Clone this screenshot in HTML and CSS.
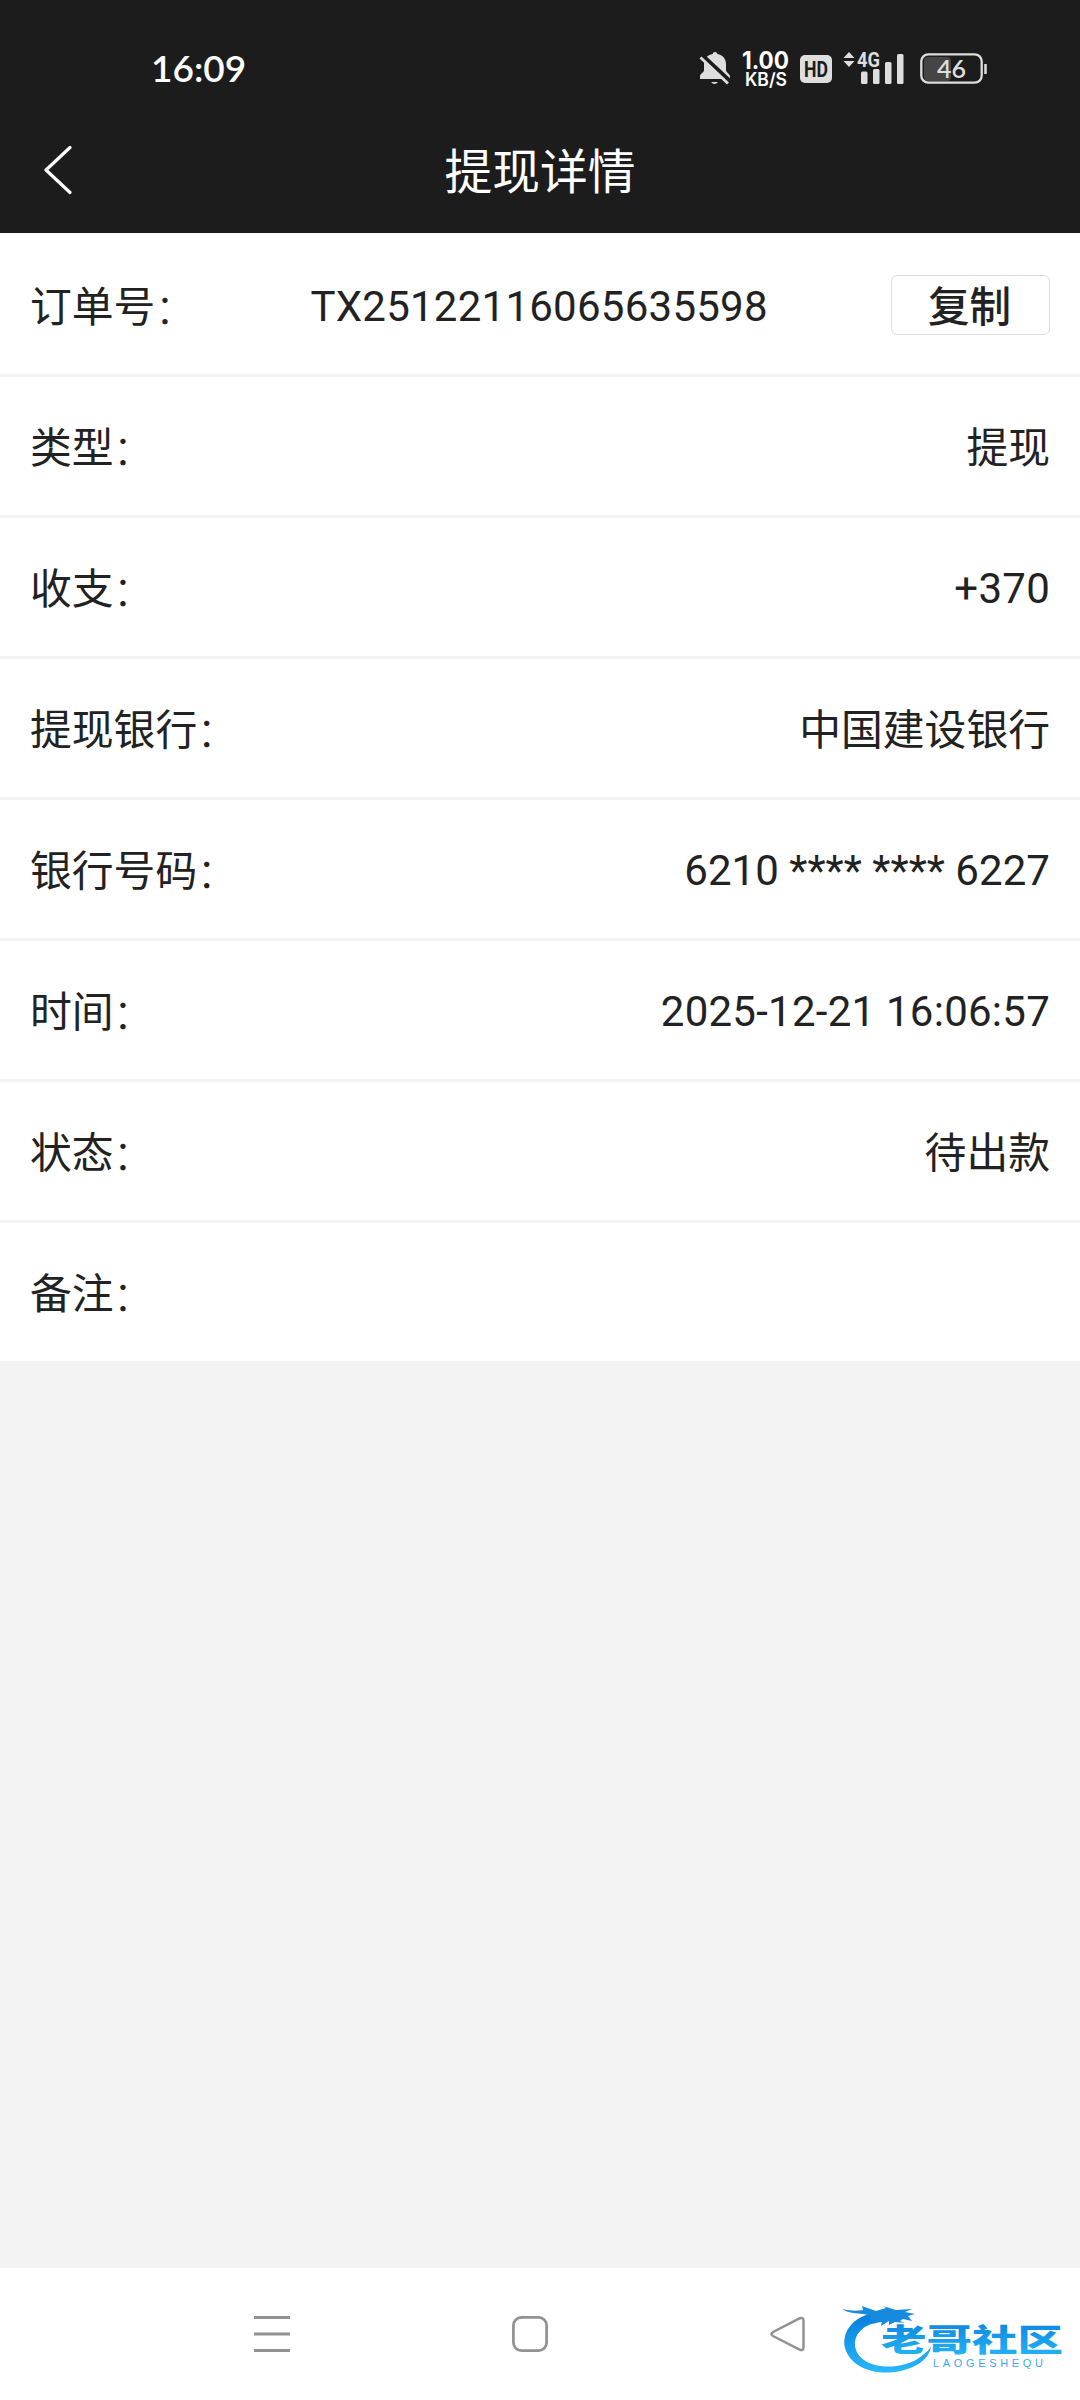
FILE: index.html
```html
<!DOCTYPE html>
<html lang="zh-CN">
<head>
<meta charset="utf-8">
<title>提现详情</title>
<link rel="stylesheet" href="styles.css">
</head>
<body>
<div class="screen">
  <header class="top">
    <div class="status">
      <span class="clock">16:09</span>
      <div class="indicators">
        <svg class="bell" width="32" height="34" viewBox="0 0 32 34"><path d="M16 0c1.500 0 2.200 .8 2.200 2C24 3 27 7 27 12v6c0 3 4 3.500 4 6.500V27H1v-2.500C1 21 5 21 5 18v-6C5 7 8 3 13.800 2 13.800.8 14.500 0 16 0z" fill="#dedede"/><path d="M12 30h7q-3.500 4-7 0z" fill="#dedede"/><path d="M3 3L32 30" stroke="#1c1c1c" stroke-width="4"/><path d="M1.500 5.500L29 31.500" stroke="#dedede" stroke-width="2.800"/></svg>
        <svg class="speed" width="48" height="44" viewBox="0 0 48 44"><text class="rate" x="0" y="22" textLength="47" lengthAdjust="spacingAndGlyphs">1.00</text><text class="unit" x="3" y="39" textLength="42" lengthAdjust="spacingAndGlyphs">KB/S</text></svg>
        <svg class="hd" width="32" height="28" viewBox="0 0 32 28"><rect width="32" height="28" rx="5" fill="#dedede"/><text class="hd-text" x="4" y="22" textLength="24" lengthAdjust="spacingAndGlyphs">HD</text></svg>
        <svg class="signal" width="61" height="34" viewBox="0 0 61 34"><g fill="#dedede"><path d="M6 0l5.500 6h-11zM6 15l5.500-6h-11z"/><rect x="18" y="19.500" width="6.500" height="12.500" rx="1.500"/><rect x="30" y="17" width="6.500" height="15" rx="1.500"/><rect x="42" y="10" width="6.500" height="22" rx="1.500"/><rect x="54" y="2" width="6.500" height="30" rx="1.500"/></g><text class="net" x="14" y="14.500" textLength="23" lengthAdjust="spacingAndGlyphs">4G</text></svg>
        <svg class="battery" width="68" height="32" viewBox="0 0 68 32"><rect x="4" y="4" width="27" height="24" rx="4" fill="#454545"/><rect x="1.300" y="1.300" width="60.400" height="28.400" rx="7" fill="none" stroke="#dedede" stroke-width="2.300"/><path d="M65.500 11v10" stroke="#dedede" stroke-width="2.500"/><text class="level" x="31.500" y="24.500" text-anchor="middle">46</text></svg>
      </div>
    </div>
    <nav class="titlebar">
      <svg class="back" width="30" height="50" viewBox="0 0 30 50"><path d="M26 2.500L2 25l24 22.500" fill="none" stroke="#fff" stroke-width="3.200" stroke-linecap="round" stroke-linejoin="round"/></svg>
      <h1>提现详情</h1>
    </nav>
  </header>
  <main class="details">
    <div class="row order"><span class="label">订单号<span class="colon">：</span></span><span class="value number">TX25122116065635598</span><button class="copy">复制</button></div>
    <div class="row"><span class="label">类型<span class="colon">：</span></span><span class="label">提现</span></div>
    <div class="row"><span class="label">收支<span class="colon">：</span></span><span class="value">+370</span></div>
    <div class="row"><span class="label">提现银行<span class="colon">：</span></span><span class="label">中国建设银行</span></div>
    <div class="row"><span class="label">银行号码<span class="colon">：</span></span><span class="value card">6210 **** **** 6227</span></div>
    <div class="row"><span class="label">时间<span class="colon">：</span></span><span class="value">2025-12-21 16:06:57</span></div>
    <div class="row"><span class="label">状态<span class="colon">：</span></span><span class="label">待出款</span></div>
    <div class="row"><span class="label">备注<span class="colon">：</span></span></div>
  </main>
  <footer class="navbar">
    <svg width="36" height="36" viewBox="0 0 36 36"><path d="M0 1.500h36M0 18h36M0 34.500h36" stroke="#929292" stroke-width="3"/></svg>
    <svg width="36" height="36" viewBox="0 0 36 36"><rect x="1.400" y="1.400" width="33.200" height="33.200" rx="8" fill="none" stroke="#929292" stroke-width="2.700"/></svg>
    <svg width="36" height="36" viewBox="0 0 36 36"><path d="M30 2.200L3 16q-3 2 0 4l27 13.800q3.500 1 3.500-2.500V4.700q0-3.500-3.500-2.500z" fill="none" stroke="#929292" stroke-width="2.500"/></svg>
    <svg class="brand" width="230" height="80" viewBox="0 0 230 80">
      <defs><linearGradient id="blue" x1="0" y1="0" x2="0" y2="1"><stop offset="0" stop-color="#087fdc"/><stop offset="1" stop-color="#27b8fb"/></linearGradient></defs>
      <path d="M24 10C8 16 0 29 3 43c5 18 27 27 50 24 19-3 33-11 36-25-9 11-20 17-34 19-21 3-40-5-42-20C12 28 23 18 40 17l8-7z" fill="url(#blue)"/>
      <path d="M0 4c9 2 15 2 21 1l-1-4 14 5 10-3-3-2 13 4 16-1-7 3 10 2-7 2 4 5-9-2-3 2 5 2-10-1-6 3v-4l-8 5 1-5-9 3 3-4-8-1 3-3C18 7 8 10 0 4z" fill="#168bdd"/>
      <text class="brand-name" x="39" y="57.500" textLength="182" lengthAdjust="spacingAndGlyphs" fill="url(#blue)" transform="scale(1 .8)">老哥社区</text>
      <text class="brand-sub" x="91" y="62" textLength="110">LAOGESHEQU</text>
    </svg>
  </footer>
</div>
</body>
</html>
```
FILE: styles.css
```css
* { box-sizing: border-box; }
body {
  margin: 0;
  font-family: Roboto, "Noto Sans CJK SC", sans-serif;
  color: #222;
}
.screen {
  display: flex;
  flex-direction: column;
  width: 1080px;
  height: 2400px;
  background: #f3f3f3;
}
.top {
  height: 233px;
  background: #1c1c1c;
  color: #fff;
}
.status {
  display: flex;
  justify-content: space-between;
  align-items: center;
  height: 106px;
  padding: 32px 92px 0 151px;
}
.clock {
  padding-bottom: 3px;
  font: 600 37px/1 Lato, sans-serif;
}
.indicators {
  display: flex;
  align-items: center;
}
.indicators svg { overflow: visible; }
.speed {
  margin-left: 11px;
  font-family: Inter, sans-serif;
  fill: #fff;
}
.rate { font-size: 24px; font-weight: 700; }
.unit { font-size: 18px; font-weight: 600; }
.hd { margin-left: 10px; }
.hd-text { font: 700 22px Roboto, sans-serif; fill: #1c1c1c; }
.signal { margin-left: 11px; }
.net { font: 700 21px Roboto, sans-serif; fill: #dedede; stroke: #1c1c1c; stroke-width: 3px; paint-order: stroke; }
.battery { margin-left: 16px; }
.level { font: 600 25px Lato, sans-serif; fill: #dedede; }
.titlebar {
  display: grid;
  grid-template-columns: 44px 1fr 44px;
  align-items: center;
  height: 127px;
  padding: 0 44px;
}
h1 {
  margin: 0;
  padding-top: 7px;
  font-size: 47.800px;
  line-height: 60px;
  font-weight: 400;
  text-align: center;
}
.details { background: #fff; }
.row {
  display: flex;
  justify-content: space-between;
  align-items: center;
  height: 141px;
  padding: 0 30px;
  border-top: 3px solid #f3f3f3;
  font-size: 41.800px;
}
.row:first-child { border-top-color: #fcfcfc; }
.label {
  padding-bottom: 2px;
  font-family: "Noto Sans CJK SC", sans-serif;
}
.colon {
  margin-left: -1px;
  font-weight: 300;
  line-height: 0;
  vertical-align: -2px;
}
.value {
  padding-top: 2px;
  font-size: 42px;
  letter-spacing: .25px;
}
.number {
  flex: 1;
  margin-right: 9px;
  text-align: center;
}
.card { letter-spacing: .05px; }
.copy {
  width: 159px;
  height: 60px;
  padding: 6px 2px 0 0;
  border: 1px solid #ddd;
  border-radius: 6px;
  background: #fff;
  color: #222;
  font: 500 41.600px/52px Roboto, "Noto Sans CJK SC", sans-serif;
}
.navbar {
  display: flex;
  align-items: center;
  height: 132px;
  margin-top: auto;
  padding-left: 254px;
  gap: 222px;
  background: #fff;
}
.brand { margin-left: -186px; margin-top: 22px; }
.brand-name { font: 900 38px "Noto Sans CJK SC", sans-serif; }
.brand-sub { font: 400 11px "Liberation Sans", sans-serif; fill: #3eaaf0; }
```
